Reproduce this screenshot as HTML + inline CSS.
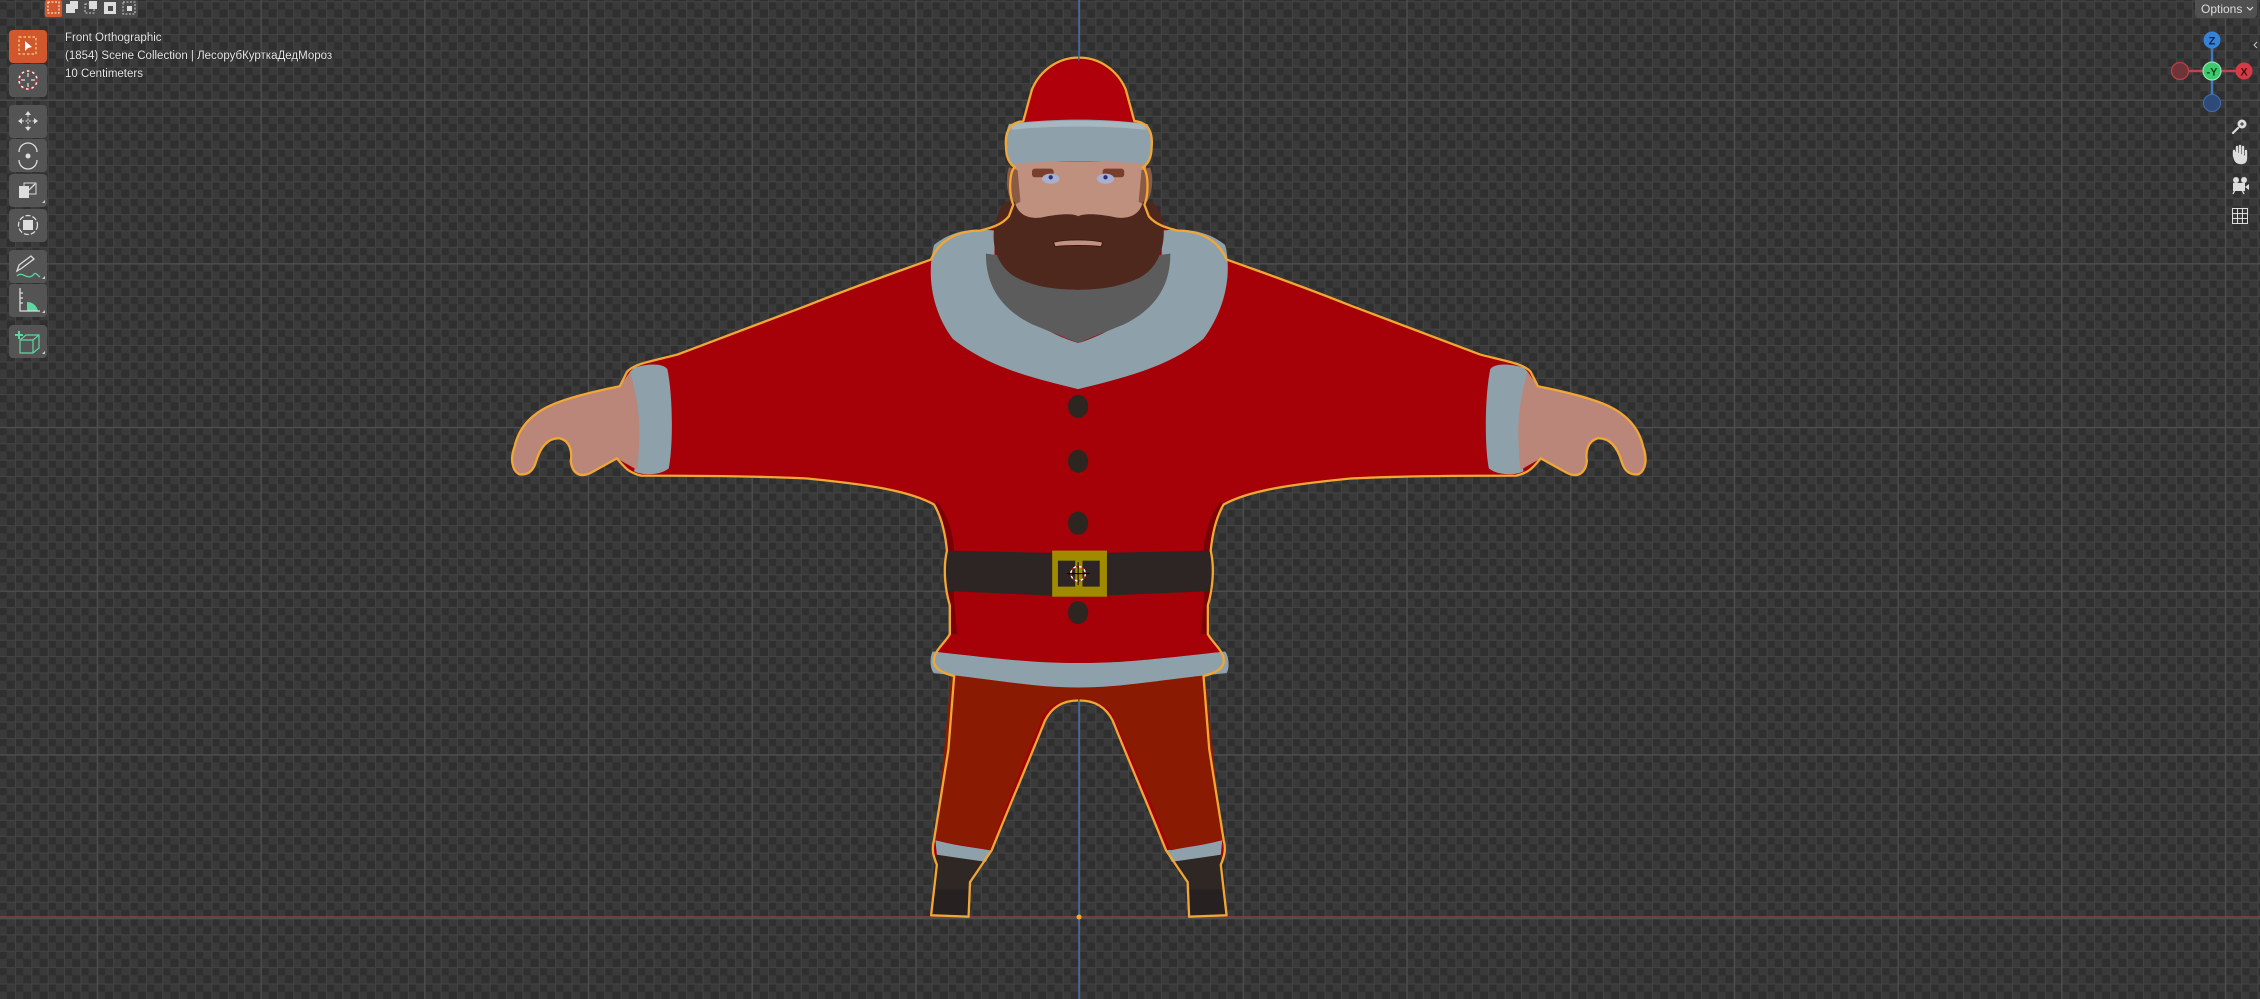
<!DOCTYPE html>
<html><head><meta charset="utf-8"><style>
html,body{margin:0;padding:0;background:#333;width:2260px;height:999px;overflow:hidden}
svg{display:block}
text{font-family:"Liberation Sans","DejaVu Sans",sans-serif}
</style></head><body>
<svg width="2260" height="999" viewBox="0 0 2260 999" xmlns="http://www.w3.org/2000/svg">
<defs>
<pattern id="chk" x="14.95" y="1.28" width="16.37" height="16.37" patternUnits="userSpaceOnUse">
<rect width="16.37" height="16.37" fill="#3a3a3a"/>
<rect x="0" y="0" width="8.185" height="8.185" fill="#2f2f2f"/>
<rect x="8.185" y="8.185" width="8.185" height="8.185" fill="#2f2f2f"/>
<rect x="0" y="0" width="16.37" height="1" fill="#434343"/>
<rect x="0" y="0" width="1" height="16.37" fill="#434343"/>
</pattern>
<pattern id="maj" x="96.8" y="99.5" width="163.7" height="163.7" patternUnits="userSpaceOnUse">
<rect x="0" y="0" width="163.7" height="1.3" fill="#4e4e4e"/>
<rect x="0" y="0" width="1.3" height="163.7" fill="#4e4e4e"/>
</pattern>
</defs>
<rect width="2260" height="999" fill="url(#chk)"/>
<rect width="2260" height="999" fill="url(#maj)"/>
<line x1="0" y1="917" x2="2260" y2="917" stroke="#8a4040" stroke-width="1.5"/>
<line x1="1079" y1="0" x2="1079" y2="999" stroke="#4a6ea8" stroke-width="1.5"/>

<g transform="scale(1.44133)">
<g id="half">
<path d="M748,40 C735,40 722,48 716,62 L710,84 C700,85 697,92 698,102 C698,110 701,114 704,116 C700,120 700,135 703,142 L700,150 C695,156 688,158 680,160 C665,160 652,166 646,180 C630,186 600,196 560,212 L470,246 C455,250 440,252 435,258 L430,268 C420,270 400,274 385,280 C370,286 360,296 357,310 C354,318 355,326 360,329 C366,330 370,327 372,320 C375,310 380,304 388,304 C396,306 397,314 396,320 C397,328 402,332 410,328 L428,318 C433,324 436,328 445,330 C470,330 520,330 560,332 C600,336 630,340 648,350 C654,360 656,372 657,382 C654,395 656,410 659,420 L659,440 C655,447 647,452 648,460 C650,466 658,468 662,469 L658,520 L648,583 C646,590 648,595 650,600 L646,635 L672,636 L673,612 L688,590 C700,560 715,525 725,500 C730,490 738,486 748,486 Z" fill="#a60008"/>
<path d="M648,350 C654,360 656,372 657,382 C654,395 656,410 659,420 L659,440 L664,440 C662,420 660,395 662,380 C660,365 656,355 650,348Z" fill="#7a0004"/>
<path d="M440,255 C450,252 460,252 463,256 C467,275 467,310 464,325 C458,330 446,330 440,327 C443,305 442,275 437,258Z" fill="#8ea1ab"/>
<path d="M437,258 L430,268 C420,270 400,274 385,280 C370,286 360,296 357,310 C354,318 355,326 360,329 C366,330 370,327 372,320 C375,310 380,304 388,304 C396,306 397,314 396,320 C397,328 402,332 410,328 L428,318 L442,326 C445,300 444,280 437,258Z" fill="#b98679"/>
<path d="M649,583 C665,587 675,588 688,590 L684,598 C670,596 660,595 650,593 Z" fill="#8ea1ab"/>
<path d="M650,593 L684,598 L673,612 L672,636 L646,635 L648,600Z" fill="#2e2724"/>
<path d="M647,617 L673,617 L672,636 L646,635Z" fill="#262020"/>
</g>
<use href="#half" transform="translate(1497,0) scale(-1,1)"/>
<rect x="746" y="60" width="5" height="426" fill="#a60008"/>
<path d="M748,42 C735,42 722,50 716,64 L711,86 L786,86 L781,64 C775,50 762,42 748,42Z" fill="#b0000c"/>
<path d="M660,468 L836,468 L848,583 L812,590 C800,560 785,525 772,496 C768,489 760,486 748,486 C736,486 728,489 724,496 C712,525 697,560 687,590 L649,583 Z" fill="#8a1a02"/>
<path d="M648,170 C660,160 675,158 690,160 L690,175 C690,205 715,228 748,238 C781,228 806,205 806,175 L806,160 C822,158 838,160 850,170 C855,190 850,215 835,235 C810,255 780,262 748,270 C716,262 686,255 661,235 C646,215 643,190 648,170Z" fill="#8ea1ab"/>
<path d="M684,176 L700,178 C710,195 730,200 748,201 C766,200 786,195 796,178 L812,176 C812,200 800,215 780,225 L748,238 L716,225 C696,215 684,200 684,176Z" fill="#5c5c5c"/>
<path d="M703,112 L795,112 L797,150 C790,175 706,175 701,150 Z" fill="#c0907f"/>
<path d="M700,116 C697,125 699,138 704,142 L708,140 L706,118Z M798,116 C801,125 799,138 794,142 L790,140 L792,118Z" fill="#8a5a45"/>
<path d="M692,150 C695,140 700,138 704,140 C706,148 712,152 722,151 C735,148 745,148 748,150 C752,148 762,148 775,151 C785,152 791,148 793,140 C797,138 802,140 806,150 C810,165 806,185 790,193 C775,200 760,201 748,201 C736,201 720,200 706,193 C690,185 686,165 692,150Z" fill="#4e271d"/>
<path d="M731,168 C740,166 756,166 765,168 L764,171 C755,170 741,170 732,171Z" fill="#c49080" stroke="#2a1510" stroke-width="0.5"/>
<rect x="716" y="117" width="15" height="6" rx="2" fill="#7a3e2c"/>
<rect x="765" y="117" width="15" height="6" rx="2" fill="#7a3e2c"/>
<ellipse cx="729" cy="124" rx="6" ry="3.5" fill="#a9afd0"/>
<ellipse cx="767" cy="124" rx="6" ry="3.5" fill="#a9afd0"/>
<circle cx="729" cy="123" r="1.5" fill="#2a3070"/>
<circle cx="767" cy="123" r="1.5" fill="#2a3070"/>
<path d="M700,86 C730,82 766,82 796,86 C800,92 800,108 796,114 C766,111 730,111 702,114 C697,108 697,92 700,86Z" fill="#8ea1ab"/>
<path d="M702,86 C730,83 766,83 794,86 L795,90 C766,87 730,87 702,90Z" fill="#a6b7c0"/>
<ellipse cx="748" cy="282" rx="7" ry="8" fill="#2d2520"/>
<ellipse cx="748" cy="320" rx="7" ry="8" fill="#2d2520"/>
<ellipse cx="748" cy="363" rx="7" ry="8" fill="#2d2520"/>
<ellipse cx="748" cy="425" rx="7" ry="8" fill="#2d2520"/>
<path d="M656,382 L748,384 L841,382 L842,410 L748,414 L656,410Z" fill="#2d2523"/>
<rect x="730" y="382" width="38" height="32" fill="#a08a00"/>
<rect x="734" y="389" width="12" height="18" fill="#2d2523"/>
<rect x="751" y="389" width="12" height="18" fill="#2d2523"/>
<path d="M647,452 C700,458 720,460 748,460 C776,460 796,458 850,452 C853,456 853,464 851,467 C800,472 780,477 748,477 C716,477 696,472 648,467 C645,464 645,456 647,452Z" fill="#8ea1ab"/>
<g fill="none" stroke="#f2a634" stroke-width="1.6" stroke-linejoin="round">
<path id="ol" d="M748,40 C735,40 722,48 716,62 L710,84 C700,85 697,92 698,102 C698,110 701,114 704,116 C700,120 700,135 703,142 L700,150 C695,156 688,158 680,160 C665,160 652,166 646,180 C630,186 600,196 560,212 L470,246 C455,250 440,252 435,258 L430,268 C420,270 400,274 385,280 C370,286 360,296 357,310 C354,318 355,326 360,329 C366,330 370,327 372,320 C375,310 380,304 388,304 C396,306 397,314 396,320 C397,328 402,332 410,328 L428,318 C433,324 436,328 445,330 C470,330 520,330 560,332 C600,336 630,340 648,350 C654,360 656,372 657,382 C654,395 656,410 659,420 L659,440 C655,447 647,452 648,460 C650,466 658,468 662,469 L658,520 L648,583 C646,590 648,595 650,600 L646,635 L672,636 L673,612 L688,590 C700,560 715,525 725,500 C730,490 738,486 748,486"/>
<use href="#ol" transform="translate(1497,0) scale(-1,1)"/>
</g>
<circle cx="748" cy="398" r="5" fill="none" stroke="#fff" stroke-width="1" stroke-dasharray="2 2"/>
<circle cx="748" cy="398" r="5" fill="none" stroke="#c02020" stroke-width="1" stroke-dasharray="2 2" stroke-dashoffset="2"/>
<path d="M740,398 H756 M748,390 V406" stroke="#000" stroke-width="0.7"/>
</g>
<circle cx="1079" cy="917" r="2.5" fill="#f2a634"/>

<rect x="44" y="0" width="94" height="18" rx="3" fill="#4a4a4a"/>
<rect x="45" y="0" width="17" height="17" rx="2" fill="#d0582c"/>
<rect x="48" y="2" width="11" height="11" fill="none" stroke="#fff" stroke-width="1" stroke-dasharray="2 1.5"/>
<rect x="66" y="4" width="9" height="9" fill="#ddd"/><rect x="70" y="1" width="8" height="8" fill="#ddd"/>
<rect x="85" y="4" width="9" height="9" fill="none" stroke="#ccc" stroke-dasharray="2 1.5"/><rect x="89" y="1" width="8" height="8" fill="#ddd"/>
<rect x="104" y="2" width="12" height="12" fill="#ddd"/><rect x="108" y="6" width="5" height="5" fill="#4a4a4a"/>
<rect x="123" y="2" width="12" height="12" fill="none" stroke="#ccc" stroke-dasharray="2 1.5"/><rect x="127" y="6" width="5" height="5" fill="#ddd"/>

<g>
<rect x="9" y="30" width="38" height="33" rx="4" fill="#d0582c"/>
<rect x="19" y="37" width="17" height="17" fill="none" stroke="#ffd080" stroke-width="1.2" stroke-dasharray="2.5 2"/>
<path d="M25,41 L25,51 L28,48 L32,47Z" fill="#fff"/>
<rect x="9" y="64" width="38" height="33" rx="4" fill="#545454"/>
<circle cx="28" cy="80" r="9" fill="none" stroke="#c03030" stroke-width="1.6" stroke-dasharray="3 2.5"/>
<circle cx="28" cy="80" r="9" fill="none" stroke="#eee" stroke-width="1.6" stroke-dasharray="2.5 3" stroke-dashoffset="3"/>
<path d="M21,80 H25 M31,80 H35 M28,73 V77 M28,83 V87" stroke="#ddd" stroke-width="1.2"/>
<rect x="9" y="105" width="38" height="33" rx="4" fill="#545454"/>
<path d="M28,111 L25,115 H31Z M28,131 L25,127 H31Z M18,121 L22,118 V124Z M38,121 L34,118 V124Z" fill="#ddd"/>
<path d="M28,115 V127 M22,121 H34" stroke="#ddd" stroke-width="1" stroke-dasharray="2 1.5"/>
<rect x="9" y="139" width="38" height="33" rx="4" fill="#545454"/>
<path d="M19,152 A9,9 0 0 1 37,152 M37,160 A9,9 0 0 1 19,160" fill="none" stroke="#ddd" stroke-width="1.3"/>
<circle cx="28" cy="156" r="2.5" fill="#ddd"/>
<rect x="9" y="174" width="38" height="33" rx="4" fill="#545454"/>
<rect x="19" y="186" width="10" height="12" fill="#ddd"/>
<rect x="24" y="183" width="12" height="11" fill="none" stroke="#ddd" stroke-width="1"/>
<path d="M29,190 L35,184" stroke="#ddd" stroke-width="1.3"/>
<path d="M42,203 L45,200 V203Z" fill="#ccc"/>
<rect x="9" y="209" width="38" height="33" rx="4" fill="#545454"/>
<circle cx="28" cy="225" r="9.5" fill="none" stroke="#ddd" stroke-width="1.3" stroke-dasharray="5 2"/>
<rect x="23" y="220" width="10" height="10" fill="#ddd"/>
<rect x="9" y="250" width="38" height="33" rx="4" fill="#545454"/>
<path d="M17,271 L19,265 L31,256 L34,259 L22,268Z" fill="none" stroke="#ddd" stroke-width="1.3"/>
<path d="M17,276 C22,270 28,282 34,274 C36,272 38,276 40,277" fill="none" stroke="#5fd6a0" stroke-width="1.3"/>
<path d="M42,279 L45,276 V279Z" fill="#ccc"/>
<rect x="9" y="284" width="38" height="33" rx="4" fill="#545454"/>
<path d="M27,302 A11,11 0 0 1 38,311 L27,311Z" fill="#5fd6a0"/>
<path d="M20,288 V311 H40 M20,293 H23 M20,298 H23 M20,303 H23" fill="none" stroke="#ddd" stroke-width="1.3"/>
<path d="M42,313 L45,310 V313Z" fill="#ccc"/>
<rect x="9" y="325" width="38" height="33" rx="4" fill="#545454"/>
<path d="M19,331 V339 M15,335 H23" stroke="#5fd6a0" stroke-width="2"/>
<path d="M20,340 L26,335 H39 V348 L33,353 H20Z M20,340 H33 V353 M33,340 L39,335" fill="none" stroke="#5fd6a0" stroke-width="1.2"/>
<path d="M42,354 L45,351 V354Z" fill="#ccc"/>
</g>

<g fill="#e8e8e8" font-size="11.5" style="paint-order:stroke" stroke="#1a1a1a" stroke-width="0.6">
<text x="65" y="41">Front Orthographic</text>
<text x="65" y="59">(1854) Scene Collection | ЛесорубКурткаДедМороз</text>
<text x="65" y="77">10 Centimeters</text>
</g>

<rect x="2195" y="-3" width="62" height="21" rx="4" fill="#505050"/>
<text x="2201" y="13" font-size="12" fill="#ddd">Options</text>
<path d="M2247,7 L2250,10 L2253,7" fill="none" stroke="#ddd" stroke-width="1.2"/>
<line x1="2212" y1="40" x2="2212" y2="103" stroke="#3f78c0" stroke-width="2.5"/>
<line x1="2180" y1="71" x2="2244" y2="71" stroke="#c84048" stroke-width="2.5"/>
<circle cx="2180" cy="71" r="8.5" fill="#6e3438" stroke="#b64048" stroke-width="1.3"/>
<circle cx="2212" cy="103" r="8.5" fill="#2e4a78" stroke="#3f6fb0" stroke-width="1"/>
<circle cx="2212" cy="40" r="8.5" fill="#3383d8"/>
<text x="2212" y="44.5" font-size="11" font-weight="bold" fill="#102040" text-anchor="middle">Z</text>
<circle cx="2244" cy="71" r="8.5" fill="#d63a44"/>
<text x="2244" y="75.5" font-size="11" font-weight="bold" fill="#401010" text-anchor="middle">X</text>
<circle cx="2212" cy="71" r="9" fill="#3ec86c" stroke="#a0f0c0" stroke-width="1"/>
<text x="2212" y="75.5" font-size="11" font-weight="bold" fill="#104020" text-anchor="middle">-Y</text>
<path d="M2257,42 L2254,45 L2257,48" fill="none" stroke="#ccc" stroke-width="1"/>
<circle cx="2242" cy="124" r="4.5" fill="#ddd"/>
<path d="M2240,124 H2244 M2242,122 V126" stroke="#333" stroke-width="1"/>
<path d="M2238,128 L2233,133" stroke="#ddd" stroke-width="2.2" stroke-linecap="round"/>
<path d="M2234,156 L2234,151 M2237,154 V147 M2240,154 V146 M2243,154 V147 M2246,156 V151 M2234,151 C2234,160 2236,163 2241,163 C2246,163 2246,160 2246,156" stroke="#ddd" stroke-width="2.4" stroke-linecap="round" fill="#ddd"/>
<circle cx="2236" cy="180" r="3" fill="#ddd"/><circle cx="2244" cy="180" r="3" fill="#ddd"/>
<rect x="2233" y="183" width="12" height="8" fill="#ddd"/>
<path d="M2245,187 L2249,184 V190Z" fill="#ddd"/>
<path d="M2235,190 L2233,194 M2242,190 L2244,194" stroke="#ddd" stroke-width="1.3"/>
<path d="M2232.5,208.5 H2247.5 V223.5 H2232.5Z M2237.5,208.5 V223.5 M2242.5,208.5 V223.5 M2232.5,213.5 H2247.5 M2232.5,218.5 H2247.5" fill="none" stroke="#ddd" stroke-width="1"/>
</svg>
</body></html>
